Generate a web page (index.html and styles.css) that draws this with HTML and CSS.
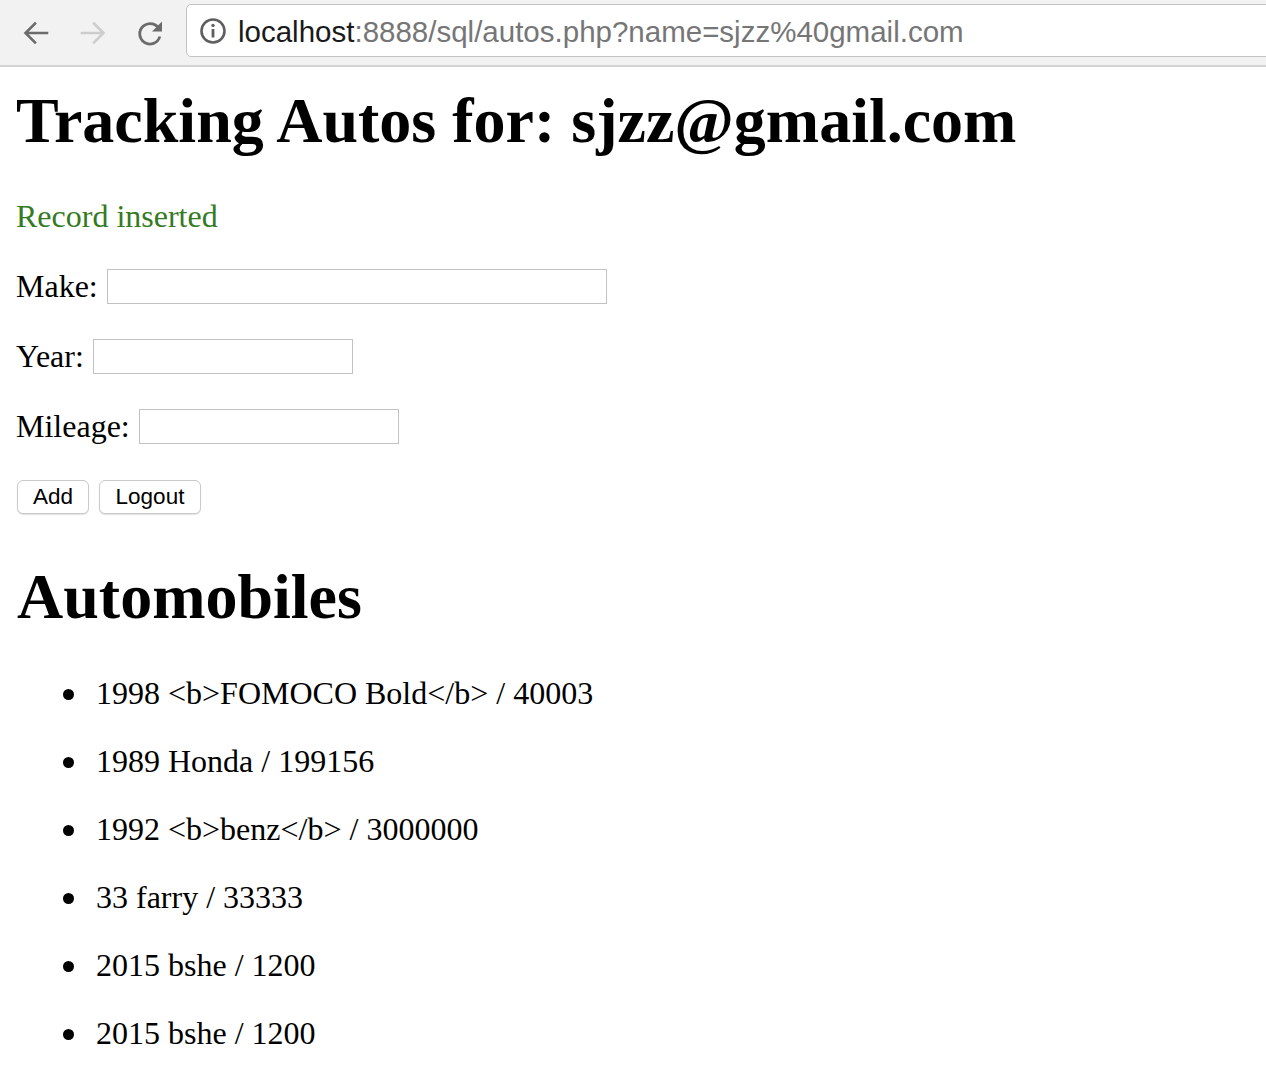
FILE: index.html
```html
<!DOCTYPE html>
<html>
<head>
<meta charset="utf-8">
<title>Autos</title>
<link rel="stylesheet" href="styles.css">
</head>
<body>
<header class="toolbar">
  <div class="nav">
    <svg class="nav-icon" width="30" height="30" viewBox="0 0 30 30"><path d="M26 15H5M14 5.5L4.5 15L14 24.5" fill="none" stroke="#6b6b6b" stroke-width="2.6" stroke-linecap="square"/></svg>
    <svg class="nav-icon" width="30" height="30" viewBox="0 0 30 30"><path d="M4 15H25M16 5.5L25.5 15L16 24.5" fill="none" stroke="#cdcdcd" stroke-width="2.6" stroke-linecap="square"/></svg>
    <svg class="nav-icon" width="30" height="30" viewBox="0 0 30 30"><path d="M24.5 12.2A10.2 10.2 0 1 0 24.8 18.5" fill="none" stroke="#6b6b6b" stroke-width="2.8"/><path d="M27 3.5V13.5H17Z" fill="#6b6b6b"/></svg>
  </div>
  <div class="omnibox">
    <svg class="info" width="28" height="28" viewBox="0 0 28 28"><circle cx="14" cy="14" r="11.5" fill="none" stroke="#5f5f5f" stroke-width="2.6"/><rect x="12.6" y="12" width="2.8" height="8.5" fill="#5f5f5f"/><circle cx="14" cy="8.4" r="1.7" fill="#5f5f5f"/></svg>
    <span class="url"><span class="host">localhost</span>:8888/sql/autos.php?name=sjzz%40gmail.com</span>
  </div>
</header>
<main class="page">
  <h1 class="title">Tracking Autos for: sjzz@gmail.com</h1>
  <p class="flash">Record inserted</p>
  <form class="form">
    <div class="row"><label>Make:</label><input class="field wide" type="text"></div>
    <div class="row"><label>Year:</label><input class="field" type="text"></div>
    <div class="row"><label>Mileage:</label><input class="field" type="text"></div>
    <div class="buttons"><button type="button" class="btn btn-add">Add</button><button type="button" class="btn btn-logout">Logout</button></div>
  </form>
  <h2 class="title section">Automobiles</h2>
  <ul class="autos">
    <li>1998 &lt;b&gt;FOMOCO Bold&lt;/b&gt; / 40003</li>
    <li>1989 Honda / 199156</li>
    <li>1992 &lt;b&gt;benz&lt;/b&gt; / 3000000</li>
    <li>33 farry / 33333</li>
    <li>2015 bshe / 1200</li>
    <li>2015 bshe / 1200</li>
  </ul>
</main>
</body>
</html>
```
FILE: styles.css
```css
html, body {
  margin: 0;
  padding: 0;
  background: #fff;
}
body {
  font-family: "Liberation Serif", "Times New Roman", serif;
  font-size: 32px;
  color: #000;
  overflow: hidden;
}
.toolbar {
  display: flex;
  align-items: center;
  height: 67px;
  background: #f2f2f2;
  border-bottom: 2px solid #d3d3d3;
  box-sizing: border-box;
}
.nav {
  display: flex;
  align-items: center;
  gap: 27px;
  padding-left: 21px;
  width: 186px;
  box-sizing: border-box;
  flex: none;
}
.nav-icon {
  display: block;
}
.omnibox {
  flex: 1;
  display: flex;
  align-items: center;
  height: 53px;
  margin-top: -4px;
  margin-right: -10px;
  background: #fff;
  border: 1px solid #c3c3c3;
  border-radius: 5px;
  box-sizing: border-box;
  padding-left: 12px;
}
.info {
  display: block;
  flex: none;
}
.url {
  margin-left: 11px;
  padding-top: 3px;
  font-family: "Liberation Sans", Arial, sans-serif;
  font-size: 29.5px;
  color: #767676;
  white-space: nowrap;
}
.host {
  color: #1a1a1a;
}
.page {
  padding: 17px 16px 0 16px;
}
.title {
  margin: 0;
  font-size: 64px;
  font-weight: bold;
  line-height: 74px;
}
.flash {
  margin: 40px 0 0 0;
  line-height: 36px;
  color: #347a22;
}
.form {
  margin: 0;
}
.row {
  display: flex;
  align-items: center;
  height: 36px;
  margin-top: 34px;
}
.row label {
  margin-right: 9px;
  line-height: 36px;
}
.field {
  width: 260px;
  height: 35px;
  box-sizing: border-box;
  border: 1px solid #c2c2c2;
  padding: 0;
  margin: 0;
  font-size: 22px;
}
.field.wide {
  width: 500px;
}
.buttons {
  display: flex;
  gap: 10px;
  margin-top: 36px;
  padding-left: 1px;
}
.btn {
  height: 34px;
  box-sizing: border-box;
  background: #fff;
  border: 1px solid #cacaca;
  border-radius: 6px;
  box-shadow: 0 1px 1px rgba(0,0,0,0.12);
  font-family: "Liberation Sans", Arial, sans-serif;
  font-size: 22.5px;
  color: #000;
  padding: 0;
  margin: 0;
}
.btn-add {
  width: 72px;
}
.btn-logout {
  width: 102px;
}
.section {
  margin-top: 46px;
  margin-left: 1px;
}
.autos {
  margin: 41px 0 0 0;
  padding-left: 80px;
  list-style: none;
}
.autos li {
  line-height: 36px;
  margin-bottom: 32px;
}
.autos li::before {
  content: "";
  display: inline-block;
  width: 11px;
  height: 11px;
  border-radius: 50%;
  background: #000;
  margin-left: -33px;
  margin-right: 22px;
  vertical-align: 4.5px;
}
```
